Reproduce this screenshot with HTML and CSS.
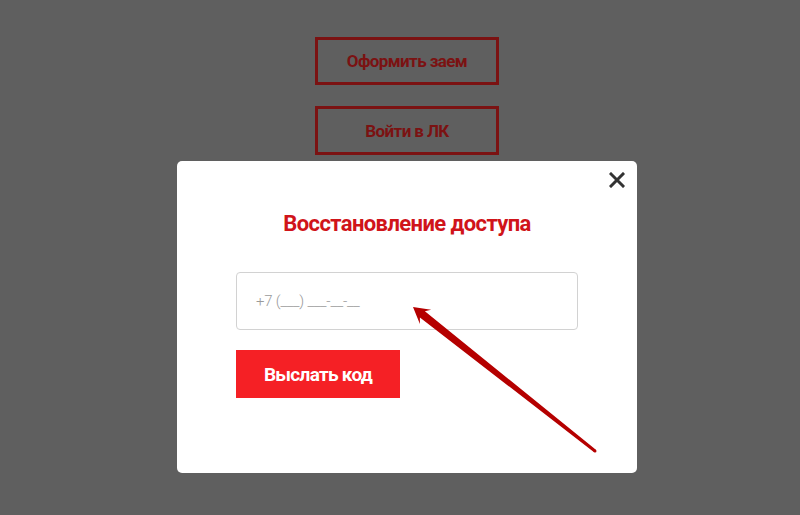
FILE: index.html
```html
<!DOCTYPE html>
<html lang="ru">
<head>
<meta charset="utf-8">
<title>Восстановление доступа</title>
<link rel="stylesheet" href="styles.css">
</head>
<body>
<div class="page">
  <a class="outline-btn first">Оформить заем</a>
  <a class="outline-btn second">Войти в ЛК</a>
  <div class="modal">
    <button class="close" aria-label="Закрыть">
      <svg width="16" height="16" viewBox="0 0 16 16"><path d="M2 2L14 14M14 2L2 14" stroke="#333" stroke-width="3" stroke-linecap="square"/></svg>
    </button>
    <h2 class="title">Восстановление доступа</h2>
    <div class="field">+7 (___) ___-__-__</div>
    <button class="send">Выслать код</button>
  </div>
</div>
<svg class="arrow" width="800" height="515" viewBox="0 0 800 515">
  <polygon fill="#b50000" points="413,307 431.1,309.8 424.9,311.3 595.9,449.8 594.1,452.2 419.9,317.5 419.9,324"/>
  <circle cx="595" cy="451" r="1.5" fill="#b50000"/>
</svg>
</body>
</html>
```
FILE: styles.css
```css
html, body {
  margin: 0;
  padding: 0;
  background: #5f5f5f;
  height: 100%;
  overflow: hidden;
}
body {
  font-family: Roboto, "Liberation Sans", sans-serif;
}
.page {
  display: flex;
  flex-direction: column;
  align-items: center;
  padding-left: 14px;
  padding-top: 37px;
}
.outline-btn {
  box-sizing: border-box;
  width: 184px;
  height: 48px;
  border: 3px solid #7b1212;
  display: flex;
  align-items: center;
  justify-content: center;
  color: #7b1212;
  font-weight: 700;
  font-size: 17px;
  letter-spacing: -0.6px;
}
.outline-btn.second {
  margin-top: 21px;
  height: 49px;
}
.modal {
  position: relative;
  box-sizing: border-box;
  margin-top: 6px;
  width: 460px;
  height: 312px;
  background: #fff;
  border-radius: 5px;
  padding: 50px 59px 0;
  display: flex;
  flex-direction: column;
  align-items: flex-start;
}
.close {
  position: absolute;
  top: 11px;
  right: 12px;
  width: 16px;
  height: 16px;
  padding: 0;
  border: 0;
  background: none;
  display: block;
}
.close svg { display: block; }
.title {
  align-self: stretch;
  margin: 0;
  text-align: center;
  color: #d0141a;
  font-size: 22px;
  line-height: 26px;
  font-weight: 700;
  letter-spacing: -0.6px;
}
.field {
  box-sizing: border-box;
  margin-top: 35px;
  width: 342px;
  height: 58px;
  border: 1px solid #d2d2d2;
  border-radius: 4px;
  padding-left: 19px;
  display: flex;
  align-items: center;
  color: #9a9a9a;
  font-size: 15px;
  font-weight: 300;
  letter-spacing: -0.2px;
}
.send {
  margin-top: 20px;
  width: 164px;
  height: 48px;
  border: 0;
  background: #f52025;
  color: #fff;
  font-family: Roboto, "Liberation Sans", sans-serif;
  font-weight: 700;
  font-size: 19px;
  letter-spacing: -0.7px;
  padding: 0;
}
.arrow {
  position: absolute;
  left: 0;
  top: 0;
  pointer-events: none;
}
```
